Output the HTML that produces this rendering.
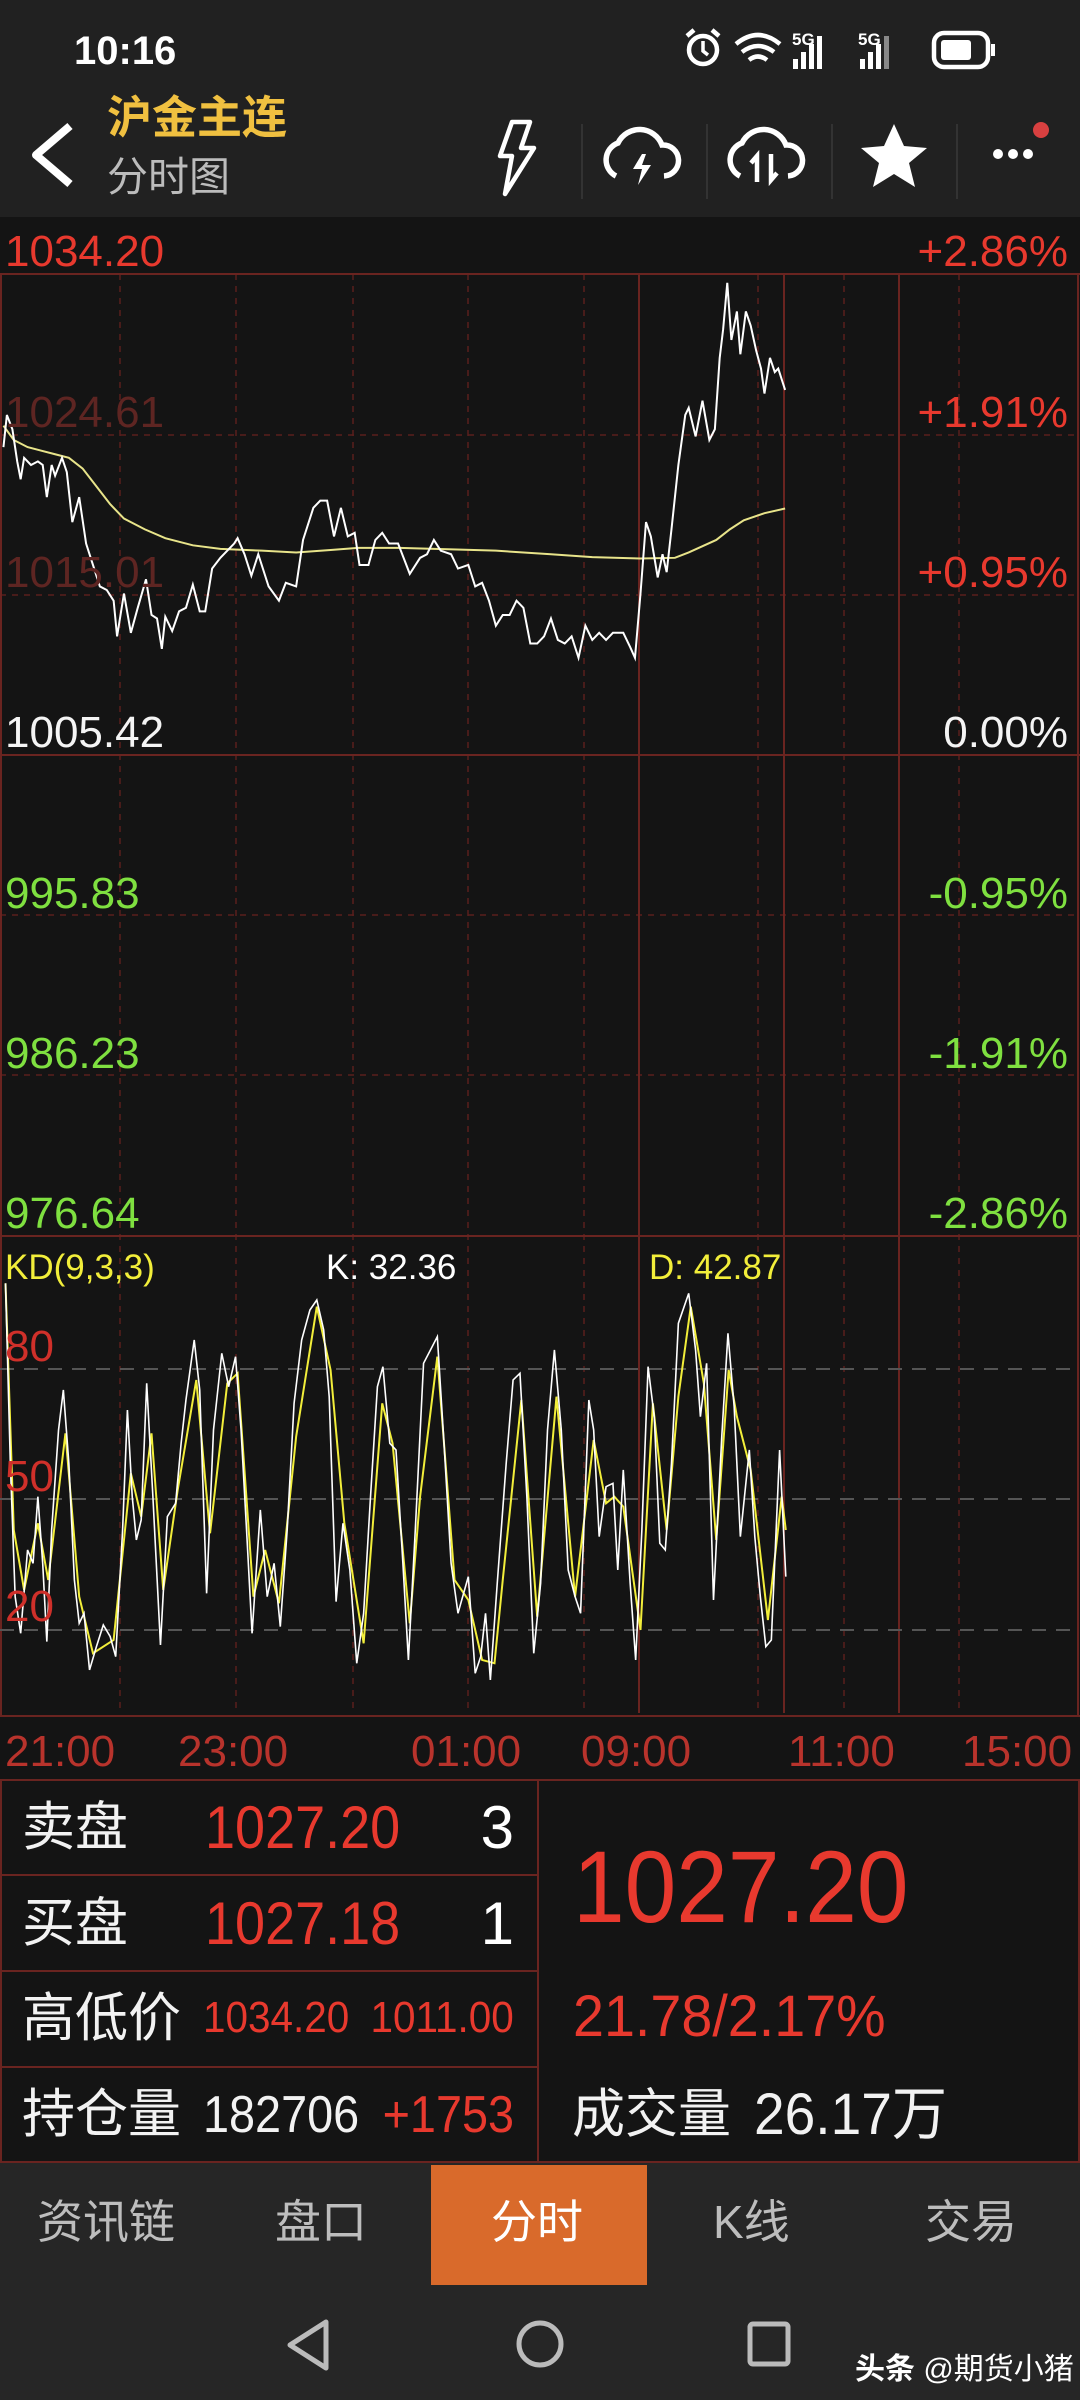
<!DOCTYPE html>
<html><head><meta charset="utf-8">
<style>
*{margin:0;padding:0;box-sizing:border-box}
body{width:1080px;height:2400px;background:#141414;position:relative;overflow:hidden;font-family:"Liberation Sans","Noto Sans CJK SC",sans-serif;color:#fff}
.a{position:absolute;white-space:nowrap;line-height:1}
.n{display:inline-block;transform-origin:left center}
.nr{display:inline-block;transform-origin:right center}
.red{color:#e8392e}
.t{color:#b8332c;font-size:44px}
.lbl{font-size:53px;color:#f2f2f2}
</style></head><body>
<div class="a" style="left:0;top:0;width:1080px;height:217px;background:#212121"></div>
<div class="a" style="left:74px;top:31px;font-size:40px;font-weight:bold"><span class="n">10:16</span></div>
<!-- status icons -->
<svg class="a" style="left:680px;top:26px" width="340" height="48" viewBox="0 0 340 48">
 <circle cx="23" cy="24" r="14" fill="none" stroke="#fff" stroke-width="4.5"/><path d="M23 15v10l5 4" stroke="#fff" stroke-width="3.5" fill="none"/><path d="M7 10l7-6M39 10l-7-6" stroke="#fff" stroke-width="4.5"/>
 <path d="M56 18q22-18 44 0M62 26q16-12 32 0M69 34q9-7 18 0" stroke="#fff" stroke-width="4.5" fill="none"/>
 <text x="112" y="19" font-size="17" font-weight="bold" fill="#fff" font-family="Liberation Sans">5G</text>
 <rect x="113" y="33" width="5" height="10" fill="#fff"/><rect x="121" y="26" width="5" height="17" fill="#fff"/><rect x="129" y="18" width="5" height="25" fill="#fff"/><rect x="137" y="10" width="5" height="33" fill="#fff"/>
 <text x="178" y="19" font-size="17" font-weight="bold" fill="#fff" font-family="Liberation Sans">5G</text>
 <rect x="180" y="33" width="5" height="10" fill="#fff"/><rect x="188" y="26" width="5" height="17" fill="#fff"/><rect x="196" y="18" width="5" height="25" fill="#fff"/><rect x="204" y="10" width="5" height="33" fill="#888"/>
 <rect x="254" y="7" width="54" height="34" rx="10" fill="none" stroke="#fff" stroke-width="4.5"/><rect x="261" y="14" width="30" height="20" rx="3" fill="#fff"/><rect x="311" y="18" width="4" height="12" fill="#fff"/>
</svg>
<svg class="a" style="left:26px;top:122px" width="50" height="66"><path d="M44 4L10 33l34 29" stroke="#fff" stroke-width="8" fill="none" stroke-linejoin="round"/></svg>
<div class="a" style="left:107px;top:95px;font-size:45px;font-weight:bold;color:#f0c040">沪金主连</div>
<div class="a" style="left:107px;top:157px;font-size:41px;color:#bcbcbc">分时图</div>
<svg class="a" style="left:490px;top:112px" width="590" height="90" viewBox="0 0 590 90">
 <path d="M22 10h18l-9 26h13L15 82l7-38H10z" fill="none" stroke="#fff" stroke-width="4.5" stroke-linejoin="round"/>
 <g stroke="#333" stroke-width="2"><path d="M92 12v75M217 12v75M342 12v75M467 12v75"/></g>
 <path d="M126 64a18 18 0 0 1 2-33a24 24 0 0 1 44 2a15 15 0 0 1 2 31" fill="none" stroke="#fff" stroke-width="5.5"/>
 <path d="M152 42l-9 15h9l-4 16l13-20h-9l4-11z" fill="#fff"/>
 <path d="M250 64a18 18 0 0 1 2-33a24 24 0 0 1 44 2a15 15 0 0 1 2 31" fill="none" stroke="#fff" stroke-width="5.5"/>
 <path d="M267 70V44l-6 7M281 42v26l6-7" fill="none" stroke="#fff" stroke-width="4.5"/>
 <path d="M404 12l10 22 23 2-18 15 6 24-21-13-21 13 6-24-18-15 23-2z" fill="#fff"/>
 <circle cx="508" cy="42" r="5" fill="#fff"/><circle cx="523" cy="42" r="5" fill="#fff"/><circle cx="538" cy="42" r="5" fill="#fff"/><circle cx="551" cy="18" r="8" fill="#d84040"/>
</svg>

<!-- chart -->
<svg class="a" style="left:0;top:0" width="1080" height="1780" viewBox="0 0 1080 1780">
 <g stroke="#5a1e1c" stroke-width="1.5" stroke-dasharray="6 6" fill="none">
  <path d="M120 274V1713M236 274V1713M353 274V1713M468 274V1713M584 274V1713M758 274V1713M844 274V1713M959 274V1713"/>
  <path d="M0 435H1078M0 595H1078M0 915H1078M0 1075H1078"/>
 </g>
 <g stroke="#6a2420" stroke-width="2" fill="none">
  <path d="M639 274V1713M784 274V1713M899 274V1713"/>
  <path d="M0 274H1080M0 755H1080M0 1236H1080M0 1716H1080M1 274V1716M1078 274V1716"/>
 </g>
 <g stroke="#555" stroke-width="2" stroke-dasharray="14 10"><path d="M0 1369H1080M0 1499H1080M0 1630H1080"/></g>
 <g transform="translate(0 215) scale(0.6887 0.3571)">
  <polyline vector-effect="non-scaling-stroke" fill="none" stroke="#e8e48a" stroke-width="2" points="5,590 20,630 40,650 60,660 80,670 100,680 120,710 140,760 160,810 180,850 210,880 240,905 280,925 320,935 380,940 430,945 480,938 520,932 580,932 650,936 720,940 800,950 860,958 930,962 980,960 1000,945 1040,910 1060,880 1080,855 1110,835 1140,822"/>
  <polyline vector-effect="non-scaling-stroke" fill="none" stroke="#fff" stroke-width="2" points="5,650 10,560 18,600 25,690 30,740 35,680 45,700 55,690 62,700 68,790 75,700 80,730 90,680 97,720 105,860 115,790 125,920 135,980 145,1040 155,1050 165,1080 170,1180 180,1060 190,1170 200,1100 212,1020 220,1120 228,1130 235,1215 240,1125 250,1165 260,1110 270,1100 280,1035 290,1110 298,1110 308,990 320,960 330,940 340,920 345,905 355,950 365,1010 375,950 390,1040 405,1080 415,1030 430,1040 440,910 455,820 465,800 475,800 485,900 495,820 505,900 515,890 522,980 535,980 545,910 555,890 565,920 578,920 595,1005 610,960 620,950 630,910 640,940 655,950 665,990 680,980 690,1040 700,1030 710,1080 720,1150 730,1120 740,1120 750,1080 760,1100 770,1200 780,1200 790,1180 800,1130 810,1190 820,1200 830,1180 840,1240 850,1150 860,1190 870,1170 880,1190 890,1170 905,1170 915,1210 922,1240 930,1060 938,860 945,900 955,1015 962,950 968,1000 975,880 985,700 995,560 1000,540 1010,620 1020,520 1030,630 1038,600 1045,400 1050,320 1056,190 1062,350 1070,270 1075,390 1083,270 1090,310 1098,380 1105,430 1110,500 1118,400 1125,440 1130,430 1140,490"/>
 </g>
 <g transform="translate(0 1230) scale(0.6887 0.3333)">
  <polyline vector-effect="non-scaling-stroke" fill="none" stroke="#f2ee3a" stroke-width="2" points="8,160 20,900 35,1080 55,880 70,1050 95,610 115,1100 135,1270 165,1230 190,730 205,860 220,610 237,1080 258,780 285,450 305,910 330,460 345,430 368,1100 385,960 405,1120 430,620 460,230 480,420 500,880 528,1240 555,520 570,640 595,1180 610,800 635,380 660,1050 680,1110 700,1290 718,1300 730,1050 757,510 780,1160 808,500 835,1100 862,630 880,820 892,800 905,830 930,1200 948,520 968,900 985,500 1003,230 1022,460 1040,930 1058,420 1070,560 1090,720 1115,1170 1135,800 1141,900"/>
  <polyline vector-effect="non-scaling-stroke" fill="none" stroke="#fff" stroke-width="1.6" points="8,160 15,700 22,1100 30,1210 40,960 48,1000 55,800 62,1000 68,1235 75,900 85,600 92,480 100,700 108,1050 115,1180 122,1150 130,1320 140,1250 150,1185 160,1220 168,1280 178,900 185,540 192,800 198,930 205,870 213,460 222,800 233,1245 243,860 255,820 263,640 270,510 282,330 290,480 300,1090 310,600 322,370 332,470 342,380 350,600 358,900 366,1210 378,840 388,1100 398,1000 407,1190 417,900 427,520 438,330 450,240 460,210 470,300 478,500 488,1115 498,880 508,1020 518,1300 528,1150 538,800 548,470 556,410 566,640 575,660 585,1000 593,1290 603,900 615,400 625,360 635,320 645,650 655,1000 665,1150 680,1040 690,1330 698,1280 705,1150 712,1350 722,1060 735,700 745,450 755,430 765,800 775,1270 785,1060 795,600 805,360 815,600 825,1020 835,1100 843,1150 855,510 862,600 870,920 880,770 890,760 897,1020 905,720 915,1060 923,1290 932,900 941,410 950,560 958,940 966,960 975,700 985,280 1000,190 1010,360 1017,560 1026,400 1036,1110 1048,620 1057,310 1066,530 1075,920 1082,780 1088,660 1096,920 1104,1100 1112,1250 1120,1230 1132,660 1141,1040"/>
 </g>
 <g stroke="#6a2420" stroke-width="2"><path d="M0 1780H1080"/></g>
</svg>

<!-- chart labels -->
<div class="a red" style="left:5px;top:230px;font-size:44px">1034.20</div>
<div class="a" style="left:5px;top:391px;font-size:44px;color:#5e2522">1024.61</div>
<div class="a" style="left:5px;top:551px;font-size:44px;color:#5e2522">1015.01</div>
<div class="a" style="left:5px;top:711px;font-size:44px;color:#f4f4f4">1005.42</div>
<div class="a" style="left:5px;top:872px;font-size:44px;color:#7fe040">995.83</div>
<div class="a" style="left:5px;top:1032px;font-size:44px;color:#7fe040">986.23</div>
<div class="a" style="left:5px;top:1192px;font-size:44px;color:#7fe040">976.64</div>
<div class="a red" style="right:12px;top:230px;font-size:44px">+2.86%</div>
<div class="a red" style="right:12px;top:391px;font-size:44px">+1.91%</div>
<div class="a red" style="right:12px;top:551px;font-size:44px">+0.95%</div>
<div class="a" style="right:12px;top:711px;font-size:44px;color:#f4f4f4">0.00%</div>
<div class="a" style="right:12px;top:872px;font-size:44px;color:#7fe040">-0.95%</div>
<div class="a" style="right:12px;top:1032px;font-size:44px;color:#7fe040">-1.91%</div>
<div class="a" style="right:12px;top:1192px;font-size:44px;color:#7fe040">-2.86%</div>
<div class="a" style="left:5px;top:1250px;font-size:35px;color:#f2ee3a">KD(9,3,3)</div>
<div class="a" style="left:326px;top:1250px;font-size:35px;color:#fff">K: 32.36</div>
<div class="a" style="left:649px;top:1250px;font-size:35px;color:#f2ee3a">D: 42.87</div>
<div class="a" style="left:5px;top:1325px;font-size:44px;color:#d0302a">80</div>
<div class="a" style="left:5px;top:1455px;font-size:44px;color:#d0302a">50</div>
<div class="a" style="left:5px;top:1585px;font-size:44px;color:#d0302a">20</div>
<!-- time axis -->
<div class="a t" style="left:5px;top:1730px">21:00</div>
<div class="a t" style="left:178px;top:1730px">23:00</div>
<div class="a t" style="left:411px;top:1730px">01:00</div>
<div class="a t" style="left:581px;top:1730px">09:00</div>
<div class="a t" style="left:788px;top:1730px">11:00</div>
<div class="a t" style="left:962px;top:1730px">15:00</div>

<!-- info panel -->
<svg class="a" style="left:0;top:1779px" width="1080" height="384">
 <g stroke="#6a2420" stroke-width="2" fill="none">
  <path d="M0 1H1080M1 0V384M1079 0V384M538 0V384M0 96H538M0 192H538M0 288H538M0 383H1080"/>
 </g>
</svg>
<div class="a lbl" style="left:22px;top:1801px">卖盘</div>
<div class="a red" style="left:205px;top:1798px;font-size:60px"><span class="n" style="transform:scaleX(.9)">1027.20</span></div>
<div class="a" style="right:566px;top:1798px;font-size:60px"><span class="nr">3</span></div>
<div class="a lbl" style="left:22px;top:1897px">买盘</div>
<div class="a red" style="left:205px;top:1894px;font-size:60px"><span class="n" style="transform:scaleX(.9)">1027.18</span></div>
<div class="a" style="right:566px;top:1894px;font-size:60px"><span class="nr">1</span></div>
<div class="a lbl" style="left:22px;top:1992px">高低价</div>
<div class="a red" style="left:203px;top:1996px;font-size:44px"><span class="n" style="transform:scaleX(.92)">1034.20</span></div>
<div class="a red" style="right:566px;top:1996px;font-size:44px"><span class="nr" style="transform:scaleX(.92)">1011.00</span></div>
<div class="a lbl" style="left:22px;top:2088px">持仓量</div>
<div class="a" style="left:203px;top:2089px;font-size:52px;color:#f2f2f2"><span class="n" style="transform:scaleX(.9)">182706</span></div>
<div class="a red" style="right:566px;top:2089px;font-size:52px"><span class="nr" style="transform:scaleX(.9)">+1753</span></div>
<div class="a red" style="left:573px;top:1836px;font-size:102px"><span class="n" style="transform:scaleX(.91)">1027.20</span></div>
<div class="a red" style="left:573px;top:1988px;font-size:58px"><span class="n" style="transform:scaleX(.96)">21.78/2.17%</span></div>
<div class="a lbl" style="left:572px;top:2088px">成交量</div>
<div class="a" style="left:754px;top:2086px;font-size:58px;color:#f2f2f2"><span class="n" style="transform:scaleX(.95)">26.17万</span></div>

<!-- tabs -->
<div class="a" style="left:0;top:2163px;width:1080px;height:237px;background:#262626"></div>
<div class="a" style="left:431px;top:2165px;width:216px;height:120px;background:#d96a2b"></div>
<div class="a" style="left:37px;top:2199px;font-size:46px;color:#bdbdbd">资讯链</div>
<div class="a" style="left:275px;top:2199px;font-size:46px;color:#bdbdbd">盘口</div>
<div class="a" style="left:491px;top:2199px;font-size:46px;color:#fff">分时</div>
<div class="a" style="left:713px;top:2199px;font-size:46px;color:#bdbdbd">K线</div>
<div class="a" style="left:925px;top:2199px;font-size:46px;color:#bdbdbd">交易</div>
<svg class="a" style="left:0;top:2300px" width="1080" height="100">
 <path d="M326 22L290 45l36 23z" fill="none" stroke="#bbb" stroke-width="5" stroke-linejoin="round"/>
 <circle cx="540" cy="44" r="21" fill="none" stroke="#bbb" stroke-width="5"/>
 <rect x="750" y="24" width="38" height="40" rx="3" fill="none" stroke="#bbb" stroke-width="5"/>
</svg>
<div class="a" style="left:855px;top:2355px;font-size:30px;color:#fff"><b>头条</b> @期货小猪</div>
</body></html>
